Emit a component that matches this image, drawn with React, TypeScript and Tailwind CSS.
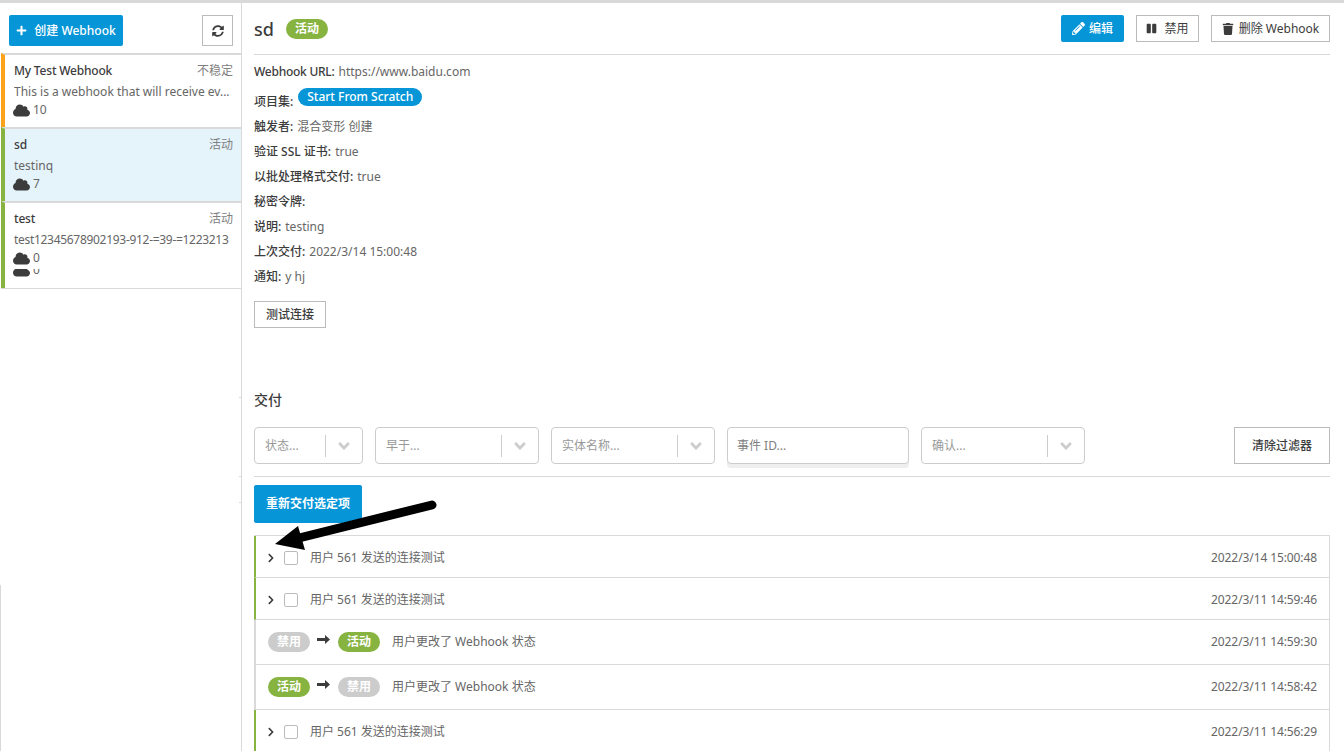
import type { ReactNode } from "react";
import { FaAngleDown, FaChevronRight, FaCloud, FaPause, FaPencilAlt, FaPlus, FaSyncAlt, FaTrash } from "react-icons/fa";

const FONT = "font-['Noto_Sans','Noto_Sans_CJK_SC',sans-serif]";

const HOOKS = [
  { name: "My Test Webhook", status: "不稳定", desc: "This is a webhook that will receive ev...", count: "10", bar: "border-l-[#faa21b]", bg: "bg-white", h: "h-[74px]", track: "" },
  { name: "sd", status: "活动", desc: "testinq", count: "7", bar: "border-l-[#87b340]", bg: "bg-[#e5f3fb]", h: "h-[74px]", track: "" },
  { name: "test", status: "活动", desc: "test12345678902193-912-=39-=1223213", count: "0", bar: "border-l-[#87b340]", bg: "bg-white", h: "h-[87px]", track: "tracking-[-0.3px]" },
];

function Pill({ on, children }: { on?: boolean; children: ReactNode }) {
  return (
    <span className={`flex h-5 w-[42px] items-center justify-center rounded-full text-xs font-bold text-white ${on ? "bg-[#87b340]" : "bg-[#cccccc]"}`}>
      {children}
    </span>
  );
}

function Info({ label, tight, children }: { label: string; tight?: boolean; children?: ReactNode }) {
  return (
    <div className="flex h-[25px] items-center text-xs">
      <span className={`font-medium text-[#3c3c3c] ${tight ? "tracking-[-0.25px]" : ""}`}>{label}:</span>
      <span className="ml-1 text-[#666666]">{children}</span>
    </div>
  );
}

function Select({ label, width }: { label: string; width: string }) {
  return (
    <div className={`flex h-[37px] items-center rounded border border-[#cccccc] bg-white pl-[10px] ${width}`}>
      <span className="flex-1 text-xs text-[#999999]">{label}</span>
      <span className="h-[22px] w-px bg-[#cccccc]" />
      <span className="flex w-[36px] justify-center text-[#cccccc]"><FaAngleDown size={18} /></span>
    </div>
  );
}

function ArrowGlyph() {
  return (
    <svg width="13" height="9" viewBox="0 0 13 9" className="-mt-[5px] ml-[7px] mr-[8px] shrink-0 fill-[#3c3c3c]">
      <polygon points="0,3 8,3 8,0 13,4.5 8,9 8,6 0,6" />
    </svg>
  );
}

function DeliveryRow({ time }: { time: string }) {
  return (
    <div className="flex h-[42px] items-center border-b border-r border-[#d9d9d9] border-l-2 border-l-[#87b340] pr-3 pt-[2px] text-xs text-[#666666]">
      <FaChevronRight size={10} className="ml-[10px] text-[#3c3c3c]" />
      <span className="ml-[8px] size-[14px] rounded-[2px] border border-[#bbbbbb] bg-white" />
      <span className="ml-[12px] flex-1">用户 561 发送的连接测试</span>
      <span className="tracking-[-0.1px]">{time}</span>
    </div>
  );
}

function StatusRow({ from, to, time }: { from: ReactNode; to: ReactNode; time: string }) {
  return (
    <div className="flex h-[45px] items-center border-b border-r border-[#d9d9d9] border-l-2 border-l-[#d9d9d9] pr-3 text-xs text-[#666666]">
      <span className="ml-[12px]">{from}</span>
      <ArrowGlyph />
      {to}
      <span className="ml-3 flex-1">用户更改了 Webhook 状态</span>
      <span className="tracking-[-0.1px]">{time}</span>
    </div>
  );
}

export default function App() {
  return (
    <div className={`relative flex h-[751px] w-[1344px] overflow-hidden border-t-[3px] border-[#d9d9d9] bg-white ${FONT}`}>
      {/* left list */}
      <aside className="relative w-[242px] shrink-0 border-r border-[#d9d9d9] pl-px">
        <div className="flex h-[50px] items-start justify-between pl-2 pr-[8px] pt-3">
          <button className="flex h-[31px] w-[114px] items-center justify-center gap-[7px] rounded-[2px] bg-[#0696d7] text-xs font-medium text-white">
            <FaPlus size={11} /> 创建 Webhook
          </button>
          <button className="flex size-[31px] items-center justify-center border border-[#bbbbbb] text-[#3c3c3c]">
            <FaSyncAlt size={12} />
          </button>
        </div>
        <div className="border-b border-[#d9d9d9]">
          {HOOKS.map((h) => (
            <div key={h.name} className={`relative overflow-hidden border-t-2 border-[#d9d9d9] border-l-4 ${h.bar} ${h.bg} ${h.h} pl-[9px] pr-2 pt-[7px]`}>
              <div className="flex justify-between text-xs leading-[18px]">
                <span className="font-medium tracking-[-0.2px] text-[#3c3c3c]">{h.name}</span>
                <span className="text-[#808080]">{h.status}</span>
              </div>
              <div className={`mt-[3px] truncate text-xs leading-[18px] text-[#666666] ${h.track}`}>{h.desc}</div>
              <div className="-ml-px flex items-center gap-[3px] text-xs leading-[18px] text-[#666666]">
                <FaCloud size={17} className="text-[#3c3c3c]" /> {h.count}
              </div>
              {/* second counter is clipped by the row above it, only its lower half shows */}
              {h.count === "0" && (
                <div className="absolute left-[8px] top-[66px] h-[10px] w-[40px] overflow-hidden">
                  <div className="-mt-[8px] flex items-center gap-[3px] text-xs leading-[18px] text-[#666666]">
                    <FaCloud size={17} className="text-[#3c3c3c]" /> 0
                  </div>
                </div>
              )}
            </div>
          ))}
        </div>
        {/* stray edge line and ticks left over in the capture */}
        <span className="absolute bottom-0 left-0 h-[166px] w-px bg-[#d9d9d9]" />
        <span className="absolute right-0 top-[394px] h-px w-[2px] bg-[#d9d9d9]" />
        <span className="absolute right-0 top-[473px] h-px w-[2px] bg-[#d9d9d9]" />
        <span className="absolute right-0 top-[499px] h-px w-[2px] bg-[#d9d9d9]" />
      </aside>

      {/* detail panel */}
      <main className="flex-1 pl-3 pr-[14px]">
        <div className="flex h-[52px] items-center border-b border-[#d9d9d9]">
          <h1 className="text-lg font-medium text-[#3c3c3c]">sd</h1>
          <span className="ml-3"><Pill on>活动</Pill></span>
          <div className="ml-auto flex gap-3 text-xs">
            <button className="flex h-[27px] w-[63px] items-center justify-center gap-[4px] rounded-[2px] bg-[#0696d7] font-medium text-white">
              <FaPencilAlt size={13} /> 编辑
            </button>
            <button className="flex h-[27px] w-[63px] items-center justify-center gap-[7px] border border-[#bbbbbb] text-[#3c3c3c]">
              <FaPause size={11} /> 禁用
            </button>
            <button className="flex h-[27px] w-[119px] items-center justify-center gap-[5px] border border-[#bbbbbb] text-[#3c3c3c]">
              <FaTrash size={12} /> 删除 Webhook
            </button>
          </div>
        </div>

        <div className="pt-[4px]">
          <Info label="Webhook URL" tight>https://www.baidu.com</Info>
          <div className="flex h-[25px] items-start text-xs">
            <span className="mt-[10px] font-medium text-[#3c3c3c]">项目集:</span>
            <span className="ml-[5px] mt-[4px] flex h-[18px] w-[124px] items-center justify-center rounded-full bg-[#0696d7] font-medium text-white">Start From Scratch</span>
          </div>
          <div className="h-[5px]" />
          <Info label="触发者">混合变形 创建</Info>
          <Info label="验证 SSL 证书">true</Info>
          <Info label="以批处理格式交付">true</Info>
          <Info label="秘密令牌" />
          <Info label="说明">testing</Info>
          <Info label="上次交付">2022/3/14 15:00:48</Info>
          <Info label="通知">y hj</Info>
        </div>

        <button className="mt-[12px] flex h-[27px] w-[72px] items-center justify-center border border-[#bbbbbb] text-xs font-medium text-[#3c3c3c]">
          测试连接
        </button>

        <h2 className="mt-[62px] text-sm font-medium leading-5 text-[#3c3c3c]">交付</h2>

        <div className="mt-[17px] flex items-start gap-3 border-b border-[#d9d9d9] pb-3">
          <Select label="状态..." width="w-[109px]" />
          <Select label="早于..." width="w-[164px]" />
          <Select label="实体名称..." width="w-[164px]" />
          <div className="flex h-[37px] w-[182px] items-center rounded border border-[#cccccc] bg-white pl-[9px] text-xs text-[#808080] shadow-[0_4px_0_#eeeeee]">事件 ID...</div>
          <Select label="确认..." width="w-[164px]" />
          <button className="ml-auto flex h-[37px] w-[96px] items-center justify-center border border-[#bbbbbb] text-xs font-medium text-[#3c3c3c]">
            清除过滤器
          </button>
        </div>

        <button className="mt-2 flex h-[38px] w-[108px] items-center justify-center rounded-[2px] bg-[#0696d7] text-xs font-semibold text-white">
          重新交付选定项
        </button>

        <div className="mt-3 border-t border-[#d9d9d9]">
          <DeliveryRow time="2022/3/14 15:00:48" />
          <DeliveryRow time="2022/3/11 14:59:46" />
          <StatusRow from={<Pill>禁用</Pill>} to={<Pill on>活动</Pill>} time="2022/3/11 14:59:30" />
          <StatusRow from={<Pill on>活动</Pill>} to={<Pill>禁用</Pill>} time="2022/3/11 14:58:42" />
          <DeliveryRow time="2022/3/11 14:56:29" />
        </div>
      </main>

      {/* annotation arrow drawn over the screenshot */}
      <svg className="pointer-events-none absolute left-0 top-[-3px]" width="1344" height="751">
        <line x1="432" y1="505" x2="295" y2="539" stroke="#000000" strokeWidth="9" strokeLinecap="round" />
        <polygon points="275,544 298,526 305,550" fill="#000000" />
      </svg>
    </div>
  );
}
